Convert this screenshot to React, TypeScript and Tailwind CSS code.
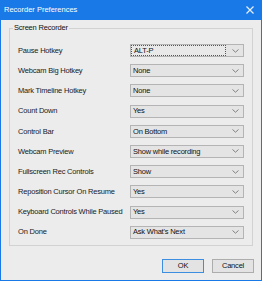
import React from "react";

const rows: { label: string; value: string }[] = [
  { label: "Pause Hotkey", value: "ALT-P" },
  { label: "Webcam Big Hotkey", value: "None" },
  { label: "Mark Timeline Hotkey", value: "None" },
  { label: "Count Down", value: "Yes" },
  { label: "Control Bar", value: "On Bottom" },
  { label: "Webcam Preview", value: "Show while recording" },
  { label: "Fullscreen Rec Controls", value: "Show" },
  { label: "Reposition Cursor On Resume", value: "Yes" },
  { label: "Keyboard Controls While Paused", value: "Yes" },
  { label: "On Done", value: "Ask What's Next" },
];

const Chevron = () => (
  <svg width="7" height="4" viewBox="0 0 7 4" className="shrink-0">
    <path d="M0.5 0.5 L3.5 3.2 L6.5 0.5" fill="none" stroke="#808080" strokeWidth="1" />
  </svg>
);

const Select: React.FC<{ value: string; focused?: boolean }> = ({ value, focused }) => (
  <div className="flex h-[13px] w-[114px] shrink-0 items-center border border-[#b4b4b4] bg-[#e4e4e4] pr-[4px]">
    <div
      className={`flex h-full flex-1 items-center pl-[2px] ${
        focused ? "mr-[6px] border border-dotted border-[#555] bg-[#e9e9e9]" : ""
      }`}
    >
      <span className="whitespace-nowrap leading-none text-[#111]">{value}</span>
    </div>
    <Chevron />
  </div>
);

export default function App() {
  return (
    <div
      className="flex h-[282px] w-[263px] flex-col bg-white text-[7.5px] tracking-[-0.2px] text-[#1a1a1a]"
      style={{ fontFamily: "'Liberation Sans', Arial, sans-serif" }}
    >
      <div className="flex h-[281px] w-[262px] flex-col border-x border-b border-[#1979e6] bg-[#ececec]">
        <div className="flex h-[20px] shrink-0 items-center justify-between bg-[#1979e6] pl-[3px] pr-[7px] text-white">
          <span className="text-[7.5px] tracking-normal">Recorder Preferences</span>
          <svg width="8" height="8" viewBox="0 0 8 8">
            <path d="M0.5 0.5 L7.5 7.5 M7.5 0.5 L0.5 7.5" stroke="#e8f0fc" strokeWidth="1.2" />
          </svg>
        </div>
        <div className="relative ml-[8px] mr-[8px] mt-[8px] h-[218px] border border-[#d2d2d2]">
          <span className="absolute left-[3px] top-[-5px] bg-[#ececec] px-[1px] leading-none text-[#111]">
            Screen Recorder
          </span>
          <div className="flex flex-col gap-[7.2px] pl-[8px] pr-[8px] pt-[15px]">
            {rows.map((r, i) => (
              <div key={r.label} className="flex items-center justify-between">
                <span className="whitespace-nowrap leading-none text-[#1a1a1a]">{r.label}</span>
                <Select value={r.value} focused={i === 0} />
              </div>
            ))}
          </div>
        </div>
        <div className="mr-[7px] mt-[13px] flex justify-end gap-[8px]">
          <button className="h-[14px] w-[42px] border border-[#3c8fe0] bg-[#e3e3e3] leading-none text-[#111]">
            OK
          </button>
          <button className="h-[14px] w-[42px] border border-[#adadad] bg-[#e3e3e3] leading-none text-[#111]">
            Cancel
          </button>
        </div>
      </div>
    </div>
  );
}
